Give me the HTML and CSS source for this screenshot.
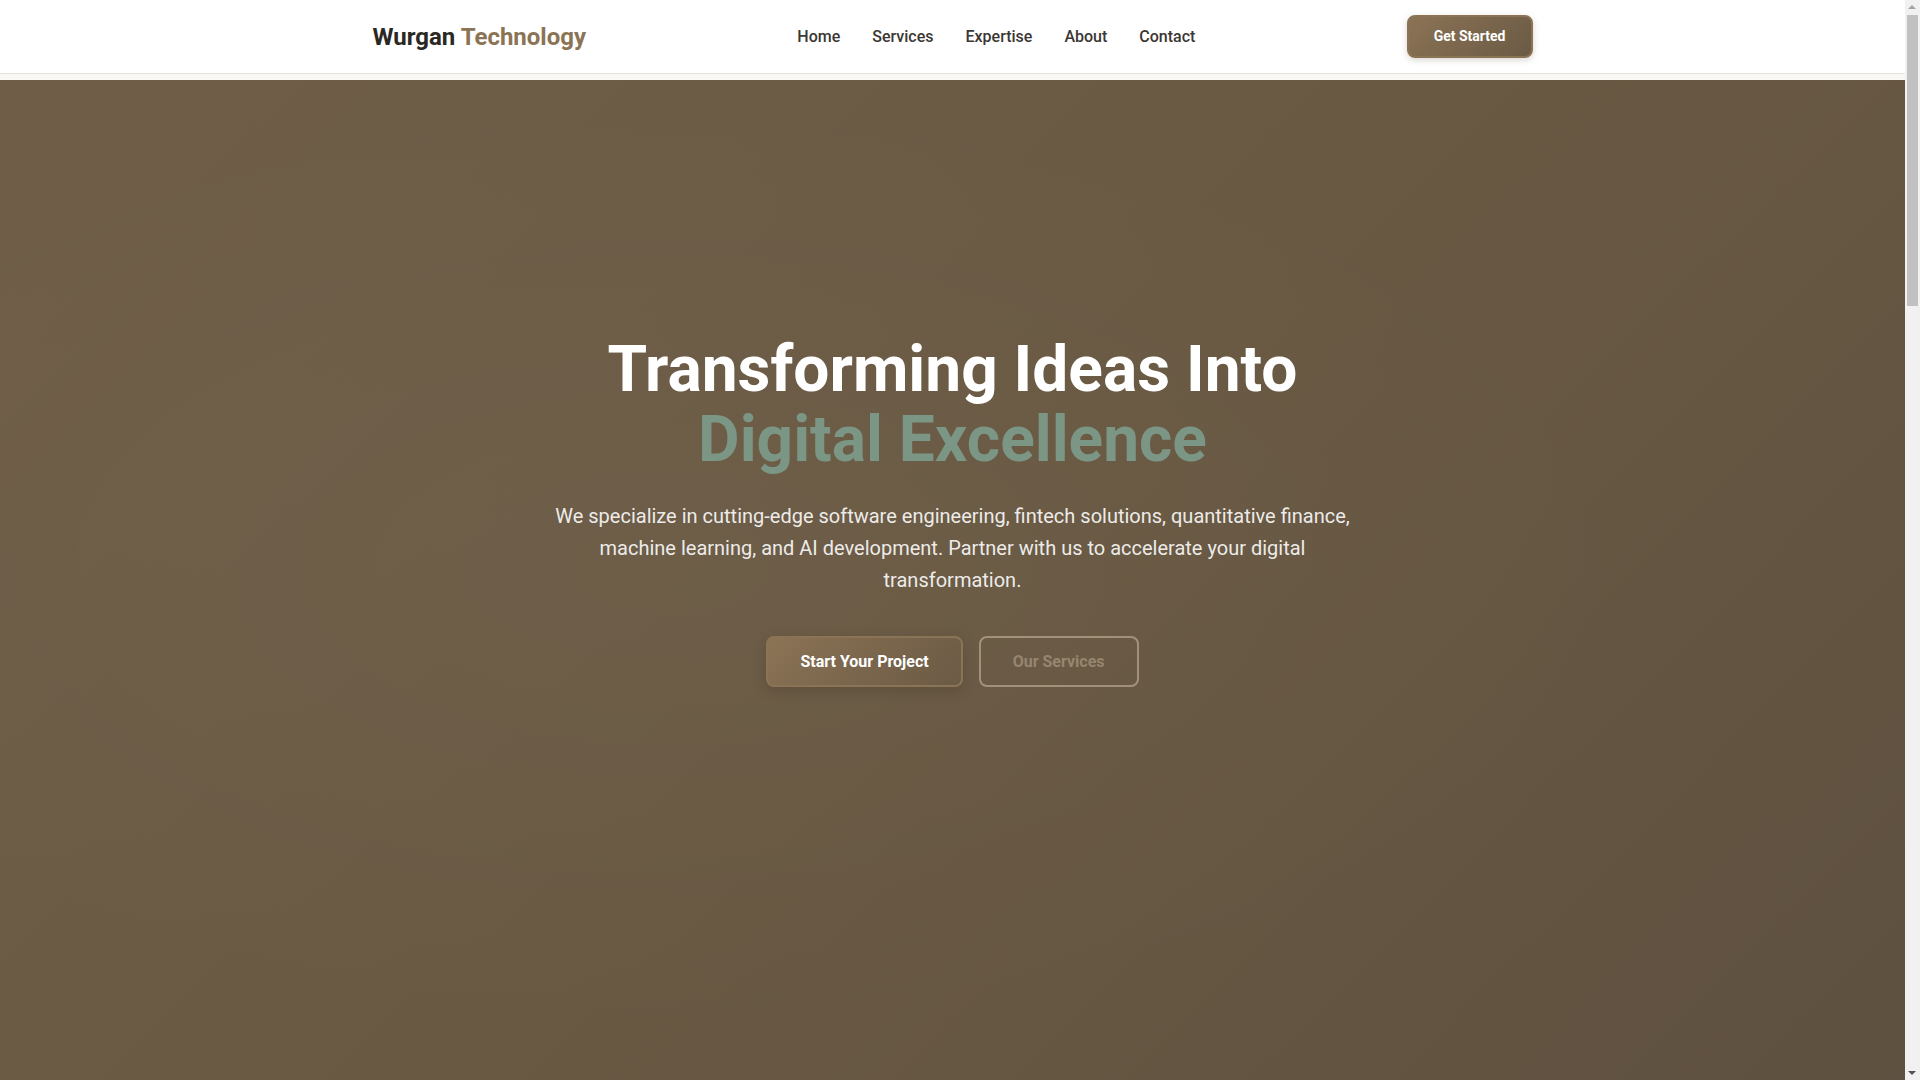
FILE: index.html
```html
<!DOCTYPE html>
<html lang="en">
<head>
<meta charset="utf-8">
<title>Wurgan Technology</title>
<link rel="stylesheet" href="styles.css">
</head>
<body>
<div class="page">
  <header class="site-header">
    <div class="container nav-inner">
      <a class="logo" href="#">Wurgan <span class="logo-accent">Technology</span></a>
      <nav class="nav-links">
        <a href="#">Home</a>
        <a href="#">Services</a>
        <a href="#">Expertise</a>
        <a href="#">About</a>
        <a href="#">Contact</a>
      </nav>
      <a class="btn btn-nav" href="#">Get Started</a>
    </div>
  </header>

  <main>
    <section class="hero">
      <div class="hero-content">
        <h1 class="hero-title">Transforming Ideas Into<br><span class="hero-accent">Digital Excellence</span></h1>
        <p class="hero-text">We specialize in cutting-edge software engineering, fintech solutions, quantitative finance, machine learning, and AI development. Partner with us to accelerate your digital transformation.</p>
        <div class="hero-actions">
          <a class="btn btn-primary" href="#">Start Your Project</a>
          <a class="btn btn-outline" href="#">Our Services</a>
        </div>
      </div>
    </section>
  </main>
</div>

<div class="scrollbar" aria-hidden="true">
  <span class="sb-arrow sb-up"></span>
  <span class="sb-thumb"></span>
  <span class="sb-arrow sb-down"></span>
</div>
</body>
</html>
```

FILE: styles.css
```css
* { box-sizing: border-box; }

html, body {
  margin: 0;
  padding: 0;
}

body {
  font-family: Roboto, "Liberation Sans", Arial, sans-serif;
  background: #faf8f5;
  color: #2d2a26;
  overflow-x: hidden;
}

.page {
  margin-right: 15px;
}

a { text-decoration: none; color: inherit; }

.container {
  max-width: 1200px;
  margin: 0 auto;
  padding: 0 20px;
}

.site-header {
  background: #ffffff;
  border-bottom: 1px solid #e6e2dc;
  height: 74px;
}

.nav-inner {
  height: 73px;
  display: flex;
  align-items: center;
  justify-content: space-between;
}

.logo {
  font-size: 24px;
  font-weight: 700;
  color: #2b2824;
}

.logo-accent { color: #8b7355; }

.nav-links {
  display: flex;
  gap: 32px;
}

.nav-links a {
  font-size: 16px;
  font-weight: 500;
  color: #3b3733;
}

.btn {
  display: inline-block;
  border-radius: 8px;
  font-weight: 700;
  line-height: 1.2;
  text-align: center;
}

.btn-nav {
  background: linear-gradient(135deg, #8b7355 0%, #6b5a45 100%);
  border: 2px solid #8b7355;
  color: #ffffff;
  font-size: 14px;
  padding: 11px 25px 12px;
  box-shadow: 0 2px 6px rgba(107, 90, 69, 0.25);
}

.hero {
  margin-top: 6px;
  min-height: 1080px;
  padding: 255px 20px 200px;
  background:
    radial-gradient(ellipse at 35% 45%, rgba(255, 255, 255, 0.025) 0%, rgba(255, 255, 255, 0) 60%),
    linear-gradient(135deg, #6f5d47 0%, #695943 50%, #5e5040 100%);
  text-align: center;
}

.hero-content {
  max-width: 820px;
  margin: 0 auto;
}

.hero-title {
  margin: 0 0 24px;
  font-size: 64px;
  line-height: 1.1;
  font-weight: 700;
  color: #ffffff;
}

.hero-accent { color: #7b9684; }

.hero-text {
  max-width: 800px;
  margin: 0 auto 40px;
  font-size: 20px;
  line-height: 1.6;
  color: rgba(255, 255, 255, 0.9);
}

.hero-actions {
  display: flex;
  justify-content: center;
  gap: 16px;
}

.btn-primary {
  background: linear-gradient(135deg, #8b7355 0%, #6b5a45 100%);
  border: 2px solid #8b7355;
  color: #ffffff;
  font-size: 16px;
  padding: 14px 32px;
  box-shadow: 0 4px 14px rgba(40, 30, 20, 0.2);
}

.btn-outline {
  background: transparent;
  border: 2px solid rgba(200, 182, 158, 0.6);
  color: #968670;
  font-size: 16px;
  padding: 14px 32px;
}

/* decorative browser scrollbar, as shown in the reference */
.scrollbar {
  position: fixed;
  top: 0;
  right: 0;
  width: 15px;
  height: 100vh;
  background: #f1f1f1;
}

.sb-thumb {
  position: absolute;
  top: 15px;
  left: 2px;
  width: 11px;
  height: 291px;
  background: #c1c1c1;
}

.sb-arrow {
  position: absolute;
  left: 3px;
  width: 0;
  height: 0;
  border-left: 4.5px solid transparent;
  border-right: 4.5px solid transparent;
}

.sb-up {
  top: 5px;
  border-bottom: 4.5px solid #a3a3a3;
}

.sb-down {
  bottom: 5px;
  border-top: 4.5px solid #505050;
}
```
